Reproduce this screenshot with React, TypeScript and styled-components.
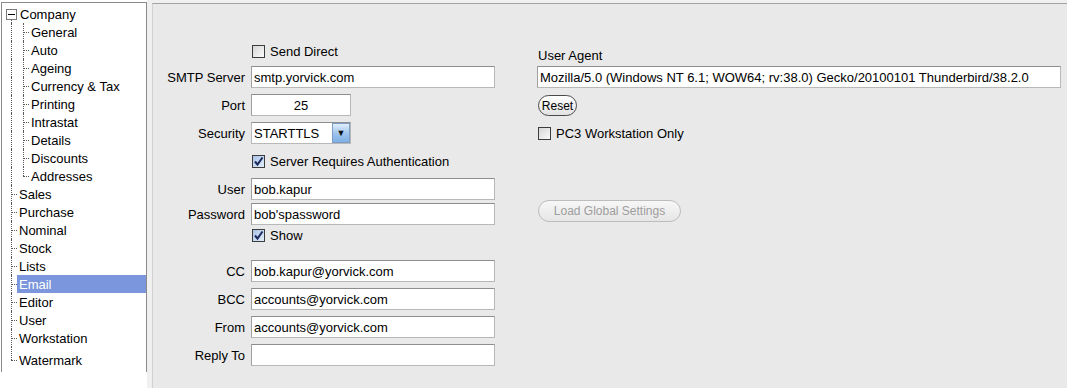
import React from 'react'
import styled, { createGlobalStyle } from 'styled-components'

const GlobalStyle = createGlobalStyle`
  html, body {
    margin: 0;
    padding: 0;
  }
  body {
    background: #f0f0f0;
    font-family: 'Liberation Sans', Arial, sans-serif;
    font-size: 13px;
    color: #000;
  }
`

const Page = styled.div`
  display: flex;
  width: 1067px;
  height: 388px;
  overflow: hidden;
`

// ---- tree ----

const TreePane = styled.div`
  flex: none;
  width: 147px;
  height: 100%;
  background: #fff;
`

const TreeBox = styled.div`
  box-sizing: border-box;
  width: 146px;
  height: 370px;
  margin: 2px 0 0 1px;
  padding-top: 2px;
  border: 1px solid #8a8a8a;
  border-bottom: none;
`

const TreeRow = styled.div<{ $h: number }>`
  display: flex;
  height: ${(p) => p.$h}px;
  padding-left: 3px;
`

const Guide = styled.span<{ $stub?: boolean; $end?: boolean }>`
  position: relative;
  flex: none;
  width: 12px;

  &::before {
    content: '';
    position: absolute;
    left: 6px;
    top: 0;
    bottom: ${(p) => (p.$end ? '50%' : '0')};
    border-left: 1px dotted #5a5a5a;
  }

  &::after {
    content: '';
    display: ${(p) => (p.$stub ? 'block' : 'none')};
    position: absolute;
    left: 6px;
    top: 50%;
    width: 6px;
    border-top: 1px dotted #5a5a5a;
  }
`

const Expander = styled.span`
  position: relative;
  flex: none;
  width: 12px;
  display: flex;
  align-items: center;

  &::after {
    content: '';
    position: absolute;
    left: 6px;
    top: calc(50% + 6px);
    bottom: 0;
    border-left: 1px dotted #5a5a5a;
  }
`

const ExpandBox = styled.span`
  box-sizing: border-box;
  width: 11px;
  height: 11px;
  margin-left: 1px;
  border: 1px solid #7a7a7a;
  background: #fff;
  display: flex;
  align-items: center;
  justify-content: center;
`

const Minus = styled.span`
  width: 7px;
  height: 1px;
  background: #000;
`

const NodeLabel = styled.span<{ $selected?: boolean; $pad?: number }>`
  flex: 1;
  display: flex;
  align-items: center;
  padding-left: ${(p) => p.$pad ?? 2}px;
  white-space: nowrap;
  background: ${(p) => (p.$selected ? '#7b96dc' : 'transparent')};
  color: ${(p) => (p.$selected ? '#fff' : '#000')};
`

// ---- settings panel ----

const Panel = styled.div`
  flex: 1;
  display: flex;
  gap: 42px;
  margin: 3px 0 0 5px;
  padding: 38px 0 0 6px;
  background: #e9e9e9;
  border-top: 1px solid #a3a3a3;
  border-left: 1px solid #d2d2d2;
`

const LeftForm = styled.div`
  display: flex;
  flex-direction: column;
  width: 336px;
`

const FormRow = styled.div<{ $top: number; $h: number }>`
  display: grid;
  grid-template-columns: 86px 244px;
  column-gap: 6px;
  align-items: center;
  height: ${(p) => p.$h}px;
  margin-top: ${(p) => p.$top}px;
`

const FieldLabel = styled.span`
  text-align: right;
  white-space: nowrap;
`

const TextInput = styled.input<{ $width?: number; $center?: boolean }>`
  box-sizing: border-box;
  width: ${(p) => (p.$width ? `${p.$width}px` : '100%')};
  height: 22px;
  margin: 0;
  padding: 0 2px;
  border: 1px solid #b8b8b8;
  border-top-color: #8e8e8e;
  border-left-color: #a0a0a0;
  background: #fff;
  font: inherit;
  color: #000;
  text-align: ${(p) => (p.$center ? 'center' : 'left')};
  outline: none;
`

const Combo = styled.div`
  box-sizing: border-box;
  display: flex;
  align-items: stretch;
  width: 100px;
  height: 22px;
  border: 1px solid #b8b8b8;
  border-top-color: #8e8e8e;
  background: #fff;
`

const ComboText = styled.span`
  flex: 1;
  display: flex;
  align-items: center;
  padding-left: 2px;
`

const ComboButton = styled.span`
  box-sizing: border-box;
  width: 18px;
  display: flex;
  align-items: center;
  justify-content: center;
  border: 1px solid #7d9cc4;
  background: linear-gradient(#e2eefb, #9cc3ec 55%, #7fb0e4);
  font-size: 9px;
  color: #111;
`

const CheckLabel = styled.label<{ $top?: number; $h?: number }>`
  display: flex;
  align-items: center;
  gap: 5px;
  padding-left: 1px;
  height: ${(p) => p.$h ?? 18}px;
  margin-top: ${(p) => p.$top ?? 0}px;
  white-space: nowrap;
`

const Box = styled.span<{ $checked?: boolean }>`
  box-sizing: border-box;
  flex: none;
  width: 13px;
  height: 13px;
  border: 1px solid #3c3c3c;
  background: ${(p) =>
    p.$checked
      ? 'linear-gradient(135deg, #a9c3e6, #e3edf9)'
      : 'linear-gradient(135deg, #d6d6d6, #fbfbfb)'};
  display: flex;
  align-items: center;
  justify-content: center;
`

const RightCol = styled.div`
  display: flex;
  flex-direction: column;
  align-items: flex-start;
  padding-top: 5px;
`

const SectionLabel = styled.span`
  height: 18px;
  line-height: 18px;
  padding-left: 1px;
`

const AgentInput = styled(TextInput)`
  margin-top: 1px;
`

const PillButton = styled.button<{ $top: number; $width: number; $h: number; $disabled?: boolean }>`
  box-sizing: border-box;
  width: ${(p) => p.$width}px;
  height: ${(p) => p.$h}px;
  margin: ${(p) => p.$top}px 0 0 1px;
  padding: 0;
  border-radius: ${(p) => p.$h / 2}px;
  border: 1px solid ${(p) => (p.$disabled ? '#bdbdbd' : '#4a4a4a')};
  background: ${(p) => (p.$disabled ? 'linear-gradient(#f7f7f7, #e6e6e6)' : 'linear-gradient(#ffffff, #e2e2e2)')};
  color: ${(p) => (p.$disabled ? '#9d9d9d' : '#000')};
  font-family: 'Liberation Sans', Arial, sans-serif;
  font-size: 12px;
`

interface TreeNode {
  label: string
  level: 0 | 1
  last?: boolean
  selected?: boolean
  height?: number
}

const nodes: TreeNode[] = [
  { label: 'General', level: 1 },
  { label: 'Auto', level: 1 },
  { label: 'Ageing', level: 1 },
  { label: 'Currency & Tax', level: 1 },
  { label: 'Printing', level: 1 },
  { label: 'Intrastat', level: 1 },
  { label: 'Details', level: 1 },
  { label: 'Discounts', level: 1 },
  { label: 'Addresses', level: 1, last: true },
  { label: 'Sales', level: 0 },
  { label: 'Purchase', level: 0 },
  { label: 'Nominal', level: 0 },
  { label: 'Stock', level: 0 },
  { label: 'Lists', level: 0 },
  { label: 'Email', level: 0, selected: true },
  { label: 'Editor', level: 0 },
  { label: 'User', level: 0 },
  { label: 'Workstation', level: 0 },
  { label: 'Watermark', level: 0, last: true, height: 26 }
]

const Check: React.FC<{ checked?: boolean }> = ({ checked }) => (
  <Box $checked={checked}>
    {checked && (
      <svg width="11" height="11" viewBox="0 0 11 11">
        <path d="M2 5.5 L4.5 8.5 L9.5 1.5" fill="none" stroke="#1b2a5e" strokeWidth="2" />
      </svg>
    )}
  </Box>
)

const SettingsTree: React.FC = () => (
  <TreePane>
    <TreeBox>
      <TreeRow $h={18}>
        <Expander>
          <ExpandBox>
            <Minus />
          </ExpandBox>
        </Expander>
        <NodeLabel $pad={3}>Company</NodeLabel>
      </TreeRow>
      {nodes.map((node) => (
        <TreeRow key={node.label} $h={node.height ?? 18}>
          {node.level === 1 ? (
            <>
              <Guide />
              <Guide $stub $end={node.last} />
            </>
          ) : (
            <Guide $stub $end={node.last} />
          )}
          <NodeLabel $selected={node.selected}>{node.label}</NodeLabel>
        </TreeRow>
      ))}
    </TreeBox>
  </TreePane>
)

const App: React.FC = () => {
  return (
    <>
      <GlobalStyle />
      <Page>
        <SettingsTree />
        <Panel>
          <LeftForm>
            <FormRow $top={0} $h={18}>
              <span />
              <CheckLabel>
                <Check />
                Send Direct
              </CheckLabel>
            </FormRow>
            <FormRow $top={6} $h={22}>
              <FieldLabel>SMTP Server</FieldLabel>
              <TextInput readOnly value="smtp.yorvick.com" />
            </FormRow>
            <FormRow $top={6} $h={22}>
              <FieldLabel>Port</FieldLabel>
              <TextInput readOnly value="25" $width={100} $center />
            </FormRow>
            <FormRow $top={6} $h={22}>
              <FieldLabel>Security</FieldLabel>
              <Combo>
                <ComboText>STARTTLS</ComboText>
                <ComboButton>▼</ComboButton>
              </Combo>
            </FormRow>
            <FormRow $top={8} $h={18}>
              <span />
              <CheckLabel>
                <Check checked />
                Server Requires Authentication
              </CheckLabel>
            </FormRow>
            <FormRow $top={8} $h={22}>
              <FieldLabel>User</FieldLabel>
              <TextInput readOnly value="bob.kapur" />
            </FormRow>
            <FormRow $top={3} $h={22}>
              <FieldLabel>Password</FieldLabel>
              <TextInput readOnly value="bob'spassword" />
            </FormRow>
            <FormRow $top={1} $h={18}>
              <span />
              <CheckLabel>
                <Check checked />
                Show
              </CheckLabel>
            </FormRow>
            <FormRow $top={16} $h={22}>
              <FieldLabel>CC</FieldLabel>
              <TextInput readOnly value="bob.kapur@yorvick.com" />
            </FormRow>
            <FormRow $top={6} $h={22}>
              <FieldLabel>BCC</FieldLabel>
              <TextInput readOnly value="accounts@yorvick.com" />
            </FormRow>
            <FormRow $top={6} $h={22}>
              <FieldLabel>From</FieldLabel>
              <TextInput readOnly value="accounts@yorvick.com" />
            </FormRow>
            <FormRow $top={6} $h={22}>
              <FieldLabel>Reply To</FieldLabel>
              <TextInput readOnly value="" />
            </FormRow>
          </LeftForm>

          <RightCol>
            <SectionLabel>User Agent</SectionLabel>
            <AgentInput
              readOnly
              $width={524}
              value="Mozilla/5.0 (Windows NT 6.1; WOW64; rv:38.0) Gecko/20100101 Thunderbird/38.2.0"
            />
            <PillButton type="button" $top={7} $width={39} $h={21}>
              Reset
            </PillButton>
            <CheckLabel $top={8}>
              <Check />
              PC3 Workstation Only
            </CheckLabel>
            <PillButton type="button" $top={58} $width={143} $h={22} $disabled disabled>
              Load Global Settings
            </PillButton>
          </RightCol>
        </Panel>
      </Page>
    </>
  )
}

export default App
